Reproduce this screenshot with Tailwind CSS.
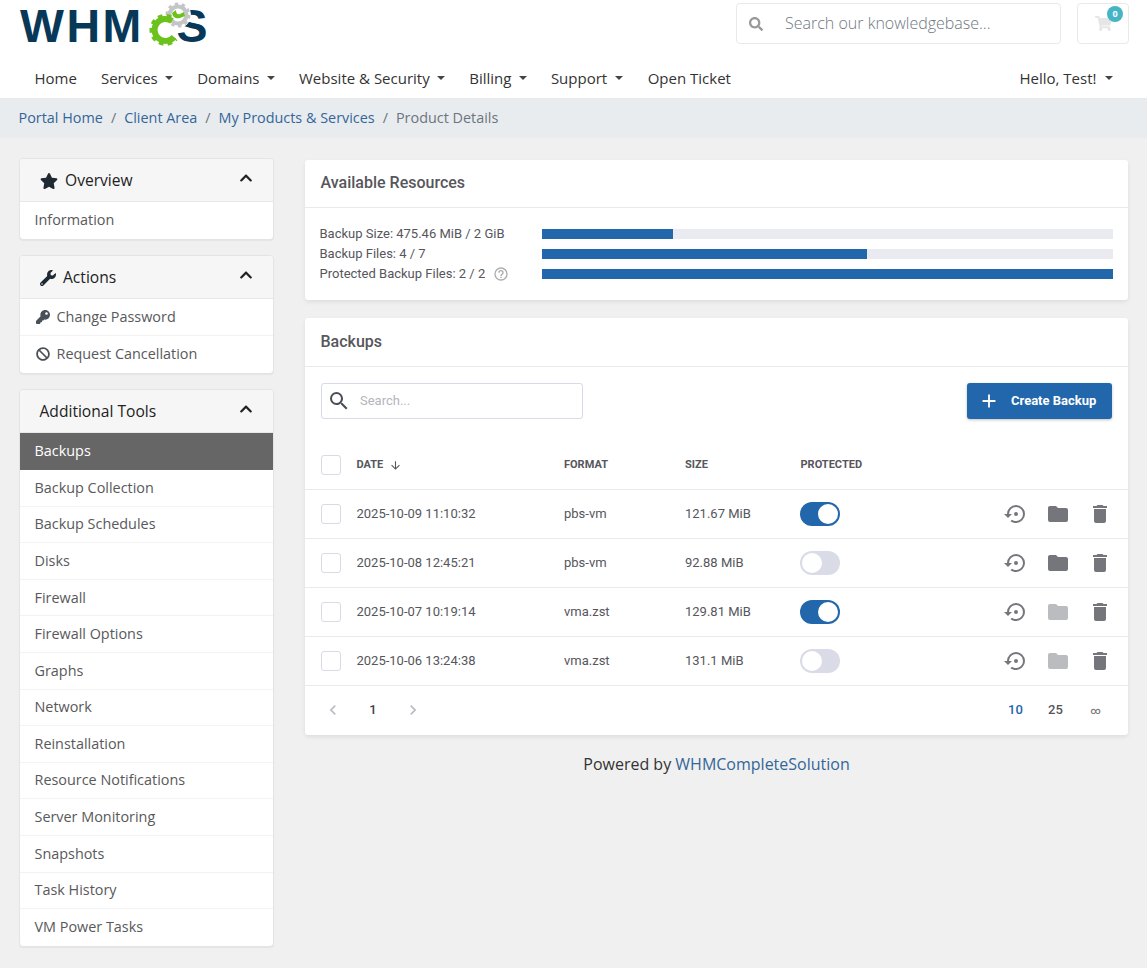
<!DOCTYPE html>
<html lang="en"><head><meta charset="utf-8"><title>Product Details</title>
<script src="https://cdn.jsdelivr.net/npm/@tailwindcss/browser@4"></script></head>
<body class="bg-[#f0f0f0] font-['Open_Sans',sans-serif] text-[#58595b] h-[968px] overflow-hidden">
<header class="bg-white h-[98px]">
  <div class="flex h-[59px] pl-[20px] pr-[18px] pt-[3px]">
    <div class="relative w-[190px] h-[44px]">
      <div class="flex items-center text-[#083858] font-['Liberation_Sans',sans-serif] font-bold text-[46.5px] leading-[52px] -mt-[2.6px] tracking-[2.5px]"><span class="w-[157px]">WHM</span><span>S</span></div>
      <svg class="absolute left-[-20px] top-[-3px]" width="215" height="50" viewBox="0 0 215 50" fill="none">
        <circle cx="178" cy="15" r="13" fill="#fff"/>
        <circle cx="178" cy="15" r="8.5" stroke="#c3c5c7" stroke-width="4"/>
        <circle cx="178" cy="15" r="11" stroke="#c3c5c7" stroke-width="3" stroke-dasharray="3.4 3.5"/>
        <path d="M172 13 c1 5 5 6 8 5 l5 -2 l-1 -4 l-4 2 c-2 1 -4 0 -4 -4 z" fill="#6cc21d"/>
        <path d="M172 21 A 11 11 0 1 0 174 37" stroke="#6cc21d" stroke-width="6"/>
        <path d="M171 17 A 14 14 0 1 0 176 39" stroke="#6cc21d" stroke-width="4" stroke-dasharray="4.6 4"/>
      </svg>
    </div>
    <div class="ml-auto flex gap-4">
      <div class="w-[325px] h-[41px] border border-[#e9e9e9] rounded-[4px] bg-white flex items-center">
        <svg class="ml-[12px] w-[14px] h-[14px] fill-[#999]" viewBox="0 0 512 512"><path d="M505 442.7L405.3 343c-4.5-4.5-10.6-7-17-7H372c27.6-35.3 44-79.7 44-128C416 93.1 322.9 0 208 0S0 93.1 0 208s93.1 208 208 208c48.3 0 92.7-16.4 128-44v16.3c0 6.4 2.5 12.5 7 17l99.7 99.7c9.4 9.4 24.6 9.4 33.9 0l28.3-28.3c9.4-9.4 9.4-24.6.1-34zM208 336c-70.7 0-128-57.2-128-128 0-70.7 57.2-128 128-128 70.7 0 128 57.2 128 128 0 70.7-57.2 128-128 128z"/></svg>
        <span class="ml-[22px] pb-[2px] text-[16px] font-light text-[#6f7780]">Search our knowledgebase...</span>
      </div>
      <div class="relative w-[52px] h-[41px] border border-[#e9e9e9] rounded-[4px] bg-white">
        <svg class="absolute left-[17px] top-[12px] w-[17px] h-[15px] fill-[#e6e6e6]" viewBox="0 0 576 512"><path d="M528.12 301.319l47.273-208C578.806 78.301 567.391 64 551.99 64H159.208l-9.166-44.81C147.758 8.021 137.93 0 126.529 0H24C10.745 0 0 10.745 0 24v16c0 13.255 10.745 24 24 24h69.883l70.248 343.435C147.325 417.1 136 435.222 136 456c0 30.928 25.072 56 56 56s56-25.072 56-56c0-15.674-6.447-29.835-16.824-40h209.647C430.447 426.165 424 440.326 424 456c0 30.928 25.072 56 56 56s56-25.072 56-56c0-22.172-12.888-41.332-31.579-50.405l5.517-24.276c3.413-15.018-8.002-29.319-23.403-29.319H218.117l-6.545-32h293.145c11.206 0 20.92-7.754 23.403-18.681z"/></svg>
        <span class="absolute left-[29px] top-[2px] w-[16px] h-[16px] rounded-full bg-[#45b5c6] text-white text-[9px] font-bold leading-[16px] text-center">0</span>
      </div>
    </div>
  </div>
  <nav class="flex items-center h-[38px] pl-[34.5px] pr-[34px] text-[15px] text-[#333] gap-[24px]">
    <span>Home</span>
    <span class="flex items-center gap-[7.5px]">Services<i class="w-0 h-0 border-x-[4px] border-x-transparent border-t-[4px] border-t-[#444]"></i></span>
    <span class="flex items-center gap-[7.5px]">Domains<i class="w-0 h-0 border-x-[4px] border-x-transparent border-t-[4px] border-t-[#444]"></i></span>
    <span class="flex items-center gap-[7.5px]">Website &amp; Security<i class="w-0 h-0 border-x-[4px] border-x-transparent border-t-[4px] border-t-[#444]"></i></span>
    <span class="flex items-center gap-[7.5px]">Billing<i class="w-0 h-0 border-x-[4px] border-x-transparent border-t-[4px] border-t-[#444]"></i></span>
    <span class="flex items-center gap-[7.5px]">Support<i class="w-0 h-0 border-x-[4px] border-x-transparent border-t-[4px] border-t-[#444]"></i></span>
    <span class="ml-[1px]">Open Ticket</span>
    <span class="ml-auto flex items-center gap-[8.5px]">Hello, Test!<i class="w-0 h-0 border-x-[4px] border-x-transparent border-t-[4px] border-t-[#444]"></i></span>
  </nav>
</header>
<div class="h-[40px] bg-[#e9ecef] flex items-center pl-[18.5px] pb-[1px] text-[14.4px] gap-[8px]">
  <span class="text-[#336699]">Portal Home</span><span class="text-[#6c757d]">/</span>
  <span class="text-[#336699]">Client Area</span><span class="text-[#6c757d]">/</span>
  <span class="text-[#336699]">My Products &amp; Services</span><span class="text-[#6c757d]">/</span>
  <span class="text-[#6c757d]">Product Details</span>
</div>
<div class="flex pl-[19px] pr-[19px] pt-[20px] gap-[31px] items-start">
  <aside class="w-[255px] flex flex-col gap-[15px] text-[14.4px] text-[#58595b]">
    <section class="bg-white border border-[#e4e4e4] rounded-[4px] shadow-[0_1px_1px_rgba(0,0,0,0.05)] overflow-hidden">
      <div class="h-[43px] bg-[#f6f6f6] border-b border-[#e8e8e8] flex items-center pl-[19.5px] pr-[20px] pt-[1px] text-[15.6px] text-[#222]">
        <svg class="w-[18px] h-[16px] fill-[#1f2933] mr-[7.5px]" viewBox="0 0 576 512"><path d="M259.3 17.8L194 150.2 47.9 171.5c-26.2 3.8-36.7 36.1-17.7 54.6l105.7 103-25 145.5c-4.5 26.3 23.2 46 46.4 33.7L288 439.6l130.7 68.7c23.2 12.2 50.9-7.4 46.4-33.7l-25-145.5 105.7-103c19-18.5 8.5-50.8-17.7-54.6L382 150.2 316.7 17.8c-11.7-23.6-45.6-23.9-57.4 0z"/></svg>
        Overview
        <svg class="ml-auto w-[14px] h-[14px] fill-[#222] -mt-[5px]" viewBox="0 0 448 512"><path d="M240.971 130.524l194.343 194.343c9.373 9.373 9.373 24.569 0 33.941l-22.667 22.667c-9.357 9.357-24.522 9.375-33.901.04L224 227.495 69.255 381.516c-9.379 9.335-24.544 9.317-33.901-.04l-22.667-22.667c-9.373-9.373-9.373-24.569 0-33.941L207.03 130.525c9.372-9.373 24.568-9.373 33.941-.001z"/></svg>
      </div>
      <div class="h-[37px] flex items-center pl-[14.5px] pb-[1px]">Information</div>
    </section>
    <section class="bg-white border border-[#e4e4e4] rounded-[4px] shadow-[0_1px_1px_rgba(0,0,0,0.05)] overflow-hidden">
      <div class="h-[43px] bg-[#f6f6f6] border-b border-[#e8e8e8] flex items-center pl-[19.5px] pr-[20px] pt-[1px] text-[15.6px] text-[#222]">
        <svg class="w-[16px] h-[16px] fill-[#1f2933] mr-[7.5px]" viewBox="0 0 512 512"><path d="M507.73 109.1c-2.24-9.03-13.54-12.09-20.12-5.51l-74.36 74.36-67.88-11.31-11.31-67.88 74.36-74.36c6.62-6.62 3.43-17.9-5.66-20.16-47.38-11.74-99.55.91-136.58 37.93-39.64 39.64-50.55 97.1-34.05 147.2L18.74 402.76c-24.99 24.99-24.99 65.51 0 90.5 24.99 24.99 65.51 24.99 90.5 0l213.21-213.21c50.12 16.71 107.47 5.68 147.37-34.22 37.07-37.07 49.7-89.32 37.91-136.73zM64 472c-13.25 0-24-10.75-24-24 0-13.26 10.75-24 24-24s24 10.74 24 24c0 13.25-10.75 24-24 24z"/></svg>
        Actions
        <svg class="ml-auto w-[14px] h-[14px] fill-[#222] -mt-[5px]" viewBox="0 0 448 512"><path d="M240.971 130.524l194.343 194.343c9.373 9.373 9.373 24.569 0 33.941l-22.667 22.667c-9.357 9.357-24.522 9.375-33.901.04L224 227.495 69.255 381.516c-9.379 9.335-24.544 9.317-33.901-.04l-22.667-22.667c-9.373-9.373-9.373-24.569 0-33.941L207.03 130.525c9.372-9.373 24.568-9.373 33.941-.001z"/></svg>
      </div>
      <div class="h-[37px] flex items-center pl-[15.5px] pb-[1px] border-b border-[#f3f3f3]">
        <svg class="w-[14px] h-[14px] fill-[#4a5058] mr-[7px]" viewBox="0 0 512 512"><path d="M512 176.001C512 273.203 433.202 352 336 352c-11.22 0-22.19-1.062-32.827-3.069l-24.012 27.014A23.999 23.999 0 0 1 261.223 384H224v40c0 13.255-10.745 24-24 24h-40v40c0 13.255-10.745 24-24 24H24c-13.255 0-24-10.745-24-24v-78.059c0-6.365 2.529-12.47 7.029-16.971l161.802-161.802C163.108 213.814 160 195.271 160 176 160 78.798 238.797.001 335.999 0 433.488-.001 512 78.511 512 176.001zM336 128c0 26.51 21.49 48 48 48s48-21.49 48-48-21.49-48-48-48-48 21.49-48 48z"/></svg>Change Password</div>
      <div class="h-[37px] flex items-center pl-[15.5px] pb-[1px]">
        <svg class="w-[14px] h-[14px] fill-[#4a5058] mr-[7px]" viewBox="0 0 512 512"><path d="M256 8C119.034 8 8 119.033 8 256s111.034 248 248 248 248-111.034 248-248S392.967 8 256 8zm130.108 117.892c65.448 65.448 70 165.481 20.677 235.637L150.47 105.216c70.204-49.356 170.226-44.735 235.638 20.676zM125.892 386.108c-65.448-65.448-70-165.481-20.677-235.637L361.53 406.784c-70.203 49.356-170.226 44.736-235.638-20.676z"/></svg>Request Cancellation</div>
    </section>
    <section class="bg-white border border-[#e4e4e4] rounded-[4px] shadow-[0_1px_1px_rgba(0,0,0,0.05)] overflow-hidden">
      <div class="h-[43px] bg-[#f6f6f6] border-b border-[#e8e8e8] flex items-center pl-[19.5px] pr-[20px] pt-[1px] text-[15.6px] text-[#222]">
        Additional Tools
        <svg class="ml-auto w-[14px] h-[14px] fill-[#222] -mt-[5px]" viewBox="0 0 448 512"><path d="M240.971 130.524l194.343 194.343c9.373 9.373 9.373 24.569 0 33.941l-22.667 22.667c-9.357 9.357-24.522 9.375-33.901.04L224 227.495 69.255 381.516c-9.379 9.335-24.544 9.317-33.901-.04l-22.667-22.667c-9.373-9.373-9.373-24.569 0-33.941L207.03 130.525c9.372-9.373 24.568-9.373 33.941-.001z"/></svg>
      </div>
      <div class="h-[37px] flex items-center pl-[14.5px] pb-[1px] bg-[#666] text-white">Backups</div>
      <div class="h-[36.6px] flex items-center pl-[14.5px] pb-[0.5px] border-b border-[#f3f3f3]">Backup Collection</div>
      <div class="h-[36.6px] flex items-center pl-[14.5px] pb-[0.5px] border-b border-[#f3f3f3]">Backup Schedules</div>
      <div class="h-[36.6px] flex items-center pl-[14.5px] pb-[0.5px] border-b border-[#f3f3f3]">Disks</div>
      <div class="h-[36.6px] flex items-center pl-[14.5px] pb-[0.5px] border-b border-[#f3f3f3]">Firewall</div>
      <div class="h-[36.6px] flex items-center pl-[14.5px] pb-[0.5px] border-b border-[#f3f3f3]">Firewall Options</div>
      <div class="h-[36.6px] flex items-center pl-[14.5px] pb-[0.5px] border-b border-[#f3f3f3]">Graphs</div>
      <div class="h-[36.6px] flex items-center pl-[14.5px] pb-[0.5px] border-b border-[#f3f3f3]">Network</div>
      <div class="h-[36.6px] flex items-center pl-[14.5px] pb-[0.5px] border-b border-[#f3f3f3]">Reinstallation</div>
      <div class="h-[36.6px] flex items-center pl-[14.5px] pb-[0.5px] border-b border-[#f3f3f3]">Resource Notifications</div>
      <div class="h-[36.6px] flex items-center pl-[14.5px] pb-[0.5px] border-b border-[#f3f3f3]">Server Monitoring</div>
      <div class="h-[36.6px] flex items-center pl-[14.5px] pb-[0.5px] border-b border-[#f3f3f3]">Snapshots</div>
      <div class="h-[36.6px] flex items-center pl-[14.5px] pb-[0.5px] border-b border-[#f3f3f3]">Task History</div>
      <div class="h-[36.6px] flex items-center pl-[14.5px] pb-[0.5px]">VM Power Tasks</div>
    </section>
  </aside>
  <main class="w-[823px] pt-[2px] font-['Roboto',sans-serif] text-[13px] text-[#56565c]">
    <section class="bg-white rounded-[3px] shadow-[0_2px_4px_rgba(0,0,0,0.08)] h-[140px]">
      <h2 class="h-[48px] flex items-center pl-[15.5px] pb-[2px] border-b border-[#e9e9ee] text-[16px] font-medium">Available Resources</h2>
      <div class="pl-[14.5px] pr-[15px] pt-[16px] flex flex-col">
        <div class="h-[20px] flex items-center"><span class="w-[222.5px]">Backup Size: 475.46 MiB / 2 GiB</span><div class="flex-1 h-[10px] bg-[#e9ebf1]"><div class="h-full w-[23%] bg-[#2266ab]"></div></div></div>
        <div class="h-[20px] flex items-center"><span class="w-[222.5px]">Backup Files: 4 / 7</span><div class="flex-1 h-[10px] bg-[#e9ebf1]"><div class="h-full w-[57%] bg-[#2266ab]"></div></div></div>
        <div class="h-[20px] flex items-center"><span class="w-[222.5px] flex items-center">Protected Backup Files: 2 / 2
          <svg class="ml-[8px] w-[16px] h-[16px] fill-[#aaaaae]" viewBox="0 0 24 24"><path d="M11,18H13V16H11V18M12,2A10,10 0 0,0 2,12A10,10 0 0,0 12,22A10,10 0 0,0 22,12A10,10 0 0,0 12,2M12,20C7.59,20 4,16.41 4,12C4,7.59 7.59,4 12,4C16.41,4 20,7.59 20,12C20,16.41 16.41,20 12,20M12,6A4,4 0 0,0 8,10H10A2,2 0 0,1 12,8A2,2 0 0,1 14,10C14,12 11,11.75 11,15H13C13,12.75 16,12.5 16,10A4,4 0 0,0 12,6Z"/></svg></span><div class="flex-1 h-[10px] bg-[#2266ab]"></div></div>
      </div>
    </section>
    <section class="bg-white rounded-[3px] shadow-[0_2px_4px_rgba(0,0,0,0.08)] mt-[18px] h-[417px]">
      <h2 class="h-[49px] flex items-center pl-[15.5px] border-b border-[#e9e9ee] text-[16px] font-medium">Backups</h2>
      <div class="flex justify-between items-center px-[16px] pt-[16px] h-[74px] pb-[22px]">
        <div class="w-[262px] h-[36px] border border-[#d8dae5] rounded-[3px] flex items-center pl-[5px]">
          <svg class="w-[24px] h-[24px] fill-[#4a4f57]" viewBox="0 0 24 24"><path d="M9.5,3A6.5,6.5 0 0,1 16,9.5C16,11.11 15.41,12.59 14.44,13.73L14.71,14H15.5L20.5,19L19,20.5L14,15.5V14.71L13.73,14.44C12.59,15.41 11.11,16 9.5,16A6.5,6.5 0 0,1 3,9.5A6.5,6.5 0 0,1 9.5,3M9.5,5C7,5 5,7 5,9.5C5,12 7,14 9.5,14C12,14 14,12 14,9.5C14,7 12,5 9.5,5Z"/></svg>
          <span class="ml-[9px] text-[#b4b5bb] text-[13px]">Search...</span>
        </div>
        <div class="w-[145px] h-[36px] bg-[#2266ab] rounded-[3px] shadow-[0_1px_3px_rgba(0,0,0,0.25)] flex items-center pl-[11px] text-white text-[13px] font-bold">
          <svg class="w-[22px] h-[22px] fill-white mr-[11px]" viewBox="0 0 24 24"><path d="M19,13H13V19H11V13H5V11H11V5H13V11H19V13Z"/></svg>Create Backup</div>
      </div>
      <div class="grid grid-cols-[35.5px_207.5px_121px_115.5px_1fr] items-center h-[49px] px-[16px] border-b border-[#e9e9ee] text-[11px] font-bold uppercase">
        <i class="block w-[20px] h-[20px] border border-[#d8dae5] rounded-[3px]"></i>
        <span class="flex items-center gap-[6px]">Date<svg class="w-[13px] h-[13px] fill-[#56565c]" viewBox="0 0 24 24"><path d="M11,4H13V16L18.5,10.5L19.92,11.92L12,19.84L4.08,11.92L5.5,10.5L11,16V4Z"/></svg></span>
        <span>Format</span><span>Size</span><span>Protected</span>
      </div>
      <div class="grid grid-cols-[35.5px_207.5px_121px_115.5px_1fr] items-center h-[49px] px-[16px] border-b border-[#e9e9ee]">
        <i class="block w-[20px] h-[20px] border border-[#d8dae5] rounded-[3px]"></i><span>2025-10-09 11:10:32</span><span>pbs-vm</span><span>121.67 MiB</span>
        <div class="flex items-center -ml-[0.5px]"><div class="w-[40px] h-[24px] rounded-full bg-[#2266ab] flex justify-end items-center pr-[2px]"><i class="block w-[20px] h-[20px] rounded-full bg-white"></i></div>
          <div class="ml-auto flex items-center gap-[18px]">
            <svg class="w-[24px] h-[24px] fill-[#75767c]" viewBox="0 0 24 24"><path d="M12,3A9,9 0 0,0 3,12H0L4,16L8,12H5A7,7 0 0,1 12,5A7,7 0 0,1 19,12A7,7 0 0,1 12,19C10.5,19 9.09,18.5 7.94,17.7L6.5,19.14C8.04,20.3 9.94,21 12,21A9,9 0 0,0 21,12A9,9 0 0,0 12,3M14,12A2,2 0 0,0 12,10A2,2 0 0,0 10,12A2,2 0 0,0 12,14A2,2 0 0,0 14,12Z"/></svg>
            <svg class="w-[24px] h-[24px] fill-[#75767c]" viewBox="0 0 24 24"><path d="M10,4H4C2.89,4 2,4.89 2,6V18A2,2 0 0,0 4,20H20A2,2 0 0,0 22,18V8C22,6.89 21.1,6 20,6H12L10,4Z"/></svg>
            <svg class="w-[24px] h-[24px] fill-[#75767c]" viewBox="0 0 24 24"><path d="M19,4H15.5L14.5,3H9.5L8.5,4H5V6H19M6,19A2,2 0 0,0 8,21H16A2,2 0 0,0 18,19V7H6V19Z"/></svg>
          </div></div>
      </div>
      <div class="grid grid-cols-[35.5px_207.5px_121px_115.5px_1fr] items-center h-[49px] px-[16px] border-b border-[#e9e9ee]">
        <i class="block w-[20px] h-[20px] border border-[#d8dae5] rounded-[3px]"></i><span>2025-10-08 12:45:21</span><span>pbs-vm</span><span>92.88 MiB</span>
        <div class="flex items-center -ml-[0.5px]"><div class="w-[40px] h-[24px] rounded-full bg-[#d9dce6] flex items-center pl-[2px]"><i class="block w-[20px] h-[20px] rounded-full bg-white"></i></div>
          <div class="ml-auto flex items-center gap-[18px]">
            <svg class="w-[24px] h-[24px] fill-[#75767c]" viewBox="0 0 24 24"><path d="M12,3A9,9 0 0,0 3,12H0L4,16L8,12H5A7,7 0 0,1 12,5A7,7 0 0,1 19,12A7,7 0 0,1 12,19C10.5,19 9.09,18.5 7.94,17.7L6.5,19.14C8.04,20.3 9.94,21 12,21A9,9 0 0,0 21,12A9,9 0 0,0 12,3M14,12A2,2 0 0,0 12,10A2,2 0 0,0 10,12A2,2 0 0,0 12,14A2,2 0 0,0 14,12Z"/></svg>
            <svg class="w-[24px] h-[24px] fill-[#75767c]" viewBox="0 0 24 24"><path d="M10,4H4C2.89,4 2,4.89 2,6V18A2,2 0 0,0 4,20H20A2,2 0 0,0 22,18V8C22,6.89 21.1,6 20,6H12L10,4Z"/></svg>
            <svg class="w-[24px] h-[24px] fill-[#75767c]" viewBox="0 0 24 24"><path d="M19,4H15.5L14.5,3H9.5L8.5,4H5V6H19M6,19A2,2 0 0,0 8,21H16A2,2 0 0,0 18,19V7H6V19Z"/></svg>
          </div></div>
      </div>
      <div class="grid grid-cols-[35.5px_207.5px_121px_115.5px_1fr] items-center h-[49px] px-[16px] border-b border-[#e9e9ee]">
        <i class="block w-[20px] h-[20px] border border-[#d8dae5] rounded-[3px]"></i><span>2025-10-07 10:19:14</span><span>vma.zst</span><span>129.81 MiB</span>
        <div class="flex items-center -ml-[0.5px]"><div class="w-[40px] h-[24px] rounded-full bg-[#2266ab] flex justify-end items-center pr-[2px]"><i class="block w-[20px] h-[20px] rounded-full bg-white"></i></div>
          <div class="ml-auto flex items-center gap-[18px]">
            <svg class="w-[24px] h-[24px] fill-[#75767c]" viewBox="0 0 24 24"><path d="M12,3A9,9 0 0,0 3,12H0L4,16L8,12H5A7,7 0 0,1 12,5A7,7 0 0,1 19,12A7,7 0 0,1 12,19C10.5,19 9.09,18.5 7.94,17.7L6.5,19.14C8.04,20.3 9.94,21 12,21A9,9 0 0,0 21,12A9,9 0 0,0 12,3M14,12A2,2 0 0,0 12,10A2,2 0 0,0 10,12A2,2 0 0,0 12,14A2,2 0 0,0 14,12Z"/></svg>
            <svg class="w-[24px] h-[24px] fill-[#bbbcc0]" viewBox="0 0 24 24"><path d="M10,4H4C2.89,4 2,4.89 2,6V18A2,2 0 0,0 4,20H20A2,2 0 0,0 22,18V8C22,6.89 21.1,6 20,6H12L10,4Z"/></svg>
            <svg class="w-[24px] h-[24px] fill-[#75767c]" viewBox="0 0 24 24"><path d="M19,4H15.5L14.5,3H9.5L8.5,4H5V6H19M6,19A2,2 0 0,0 8,21H16A2,2 0 0,0 18,19V7H6V19Z"/></svg>
          </div></div>
      </div>
      <div class="grid grid-cols-[35.5px_207.5px_121px_115.5px_1fr] items-center h-[49px] px-[16px] border-b border-[#e9e9ee]">
        <i class="block w-[20px] h-[20px] border border-[#d8dae5] rounded-[3px]"></i><span>2025-10-06 13:24:38</span><span>vma.zst</span><span>131.1 MiB</span>
        <div class="flex items-center -ml-[0.5px]"><div class="w-[40px] h-[24px] rounded-full bg-[#d9dce6] flex items-center pl-[2px]"><i class="block w-[20px] h-[20px] rounded-full bg-white"></i></div>
          <div class="ml-auto flex items-center gap-[18px]">
            <svg class="w-[24px] h-[24px] fill-[#75767c]" viewBox="0 0 24 24"><path d="M12,3A9,9 0 0,0 3,12H0L4,16L8,12H5A7,7 0 0,1 12,5A7,7 0 0,1 19,12A7,7 0 0,1 12,19C10.5,19 9.09,18.5 7.94,17.7L6.5,19.14C8.04,20.3 9.94,21 12,21A9,9 0 0,0 21,12A9,9 0 0,0 12,3M14,12A2,2 0 0,0 12,10A2,2 0 0,0 10,12A2,2 0 0,0 12,14A2,2 0 0,0 14,12Z"/></svg>
            <svg class="w-[24px] h-[24px] fill-[#bbbcc0]" viewBox="0 0 24 24"><path d="M10,4H4C2.89,4 2,4.89 2,6V18A2,2 0 0,0 4,20H20A2,2 0 0,0 22,18V8C22,6.89 21.1,6 20,6H12L10,4Z"/></svg>
            <svg class="w-[24px] h-[24px] fill-[#75767c]" viewBox="0 0 24 24"><path d="M19,4H15.5L14.5,3H9.5L8.5,4H5V6H19M6,19A2,2 0 0,0 8,21H16A2,2 0 0,0 18,19V7H6V19Z"/></svg>
          </div></div>
      </div>
      <div class="h-[48px] flex items-center pl-[8px] pr-[12.5px] text-[13px] font-medium">
        <span class="w-[40px] flex justify-center"><svg class="w-[20px] h-[20px] fill-[#bbbcc4]" viewBox="0 0 24 24"><path d="M15.41,16.58L10.83,12L15.41,7.41L14,6L8,12L14,18L15.41,16.58Z"/></svg></span>
        <span class="w-[40px] text-center text-[#3f3f4c]">1</span>
        <span class="w-[40px] flex justify-center"><svg class="w-[20px] h-[20px] fill-[#bbbcc4]" viewBox="0 0 24 24"><path d="M8.59,16.58L13.17,12L8.59,7.41L10,6L16,12L10,18L8.59,16.58Z"/></svg></span>
        <span class="ml-auto w-[40px] text-center text-[#2266ab]">10</span><span class="w-[40px] text-center">25</span><span class="w-[40px] text-center text-[10px] text-[#77777d]">∞</span>
      </div>
    </section>
    <p class="font-['Open_Sans',sans-serif] text-[16px] text-[#333] text-center mt-[17px]">Powered by <span class="text-[#336699]">WHMCompleteSolution</span></p>
  </main>
</div>
</body></html>
